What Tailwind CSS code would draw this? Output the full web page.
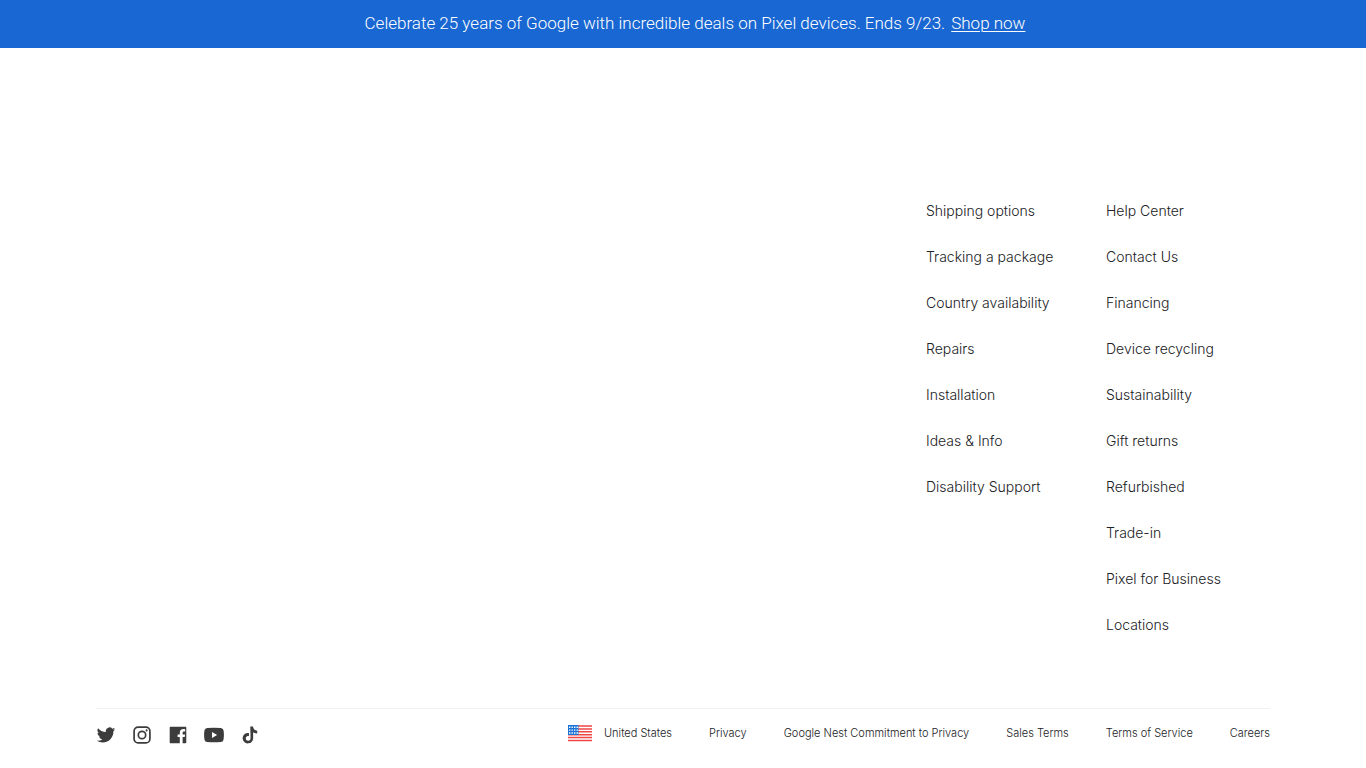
<!DOCTYPE html>
<html lang="en">
<head>
<meta charset="utf-8">
<meta name="viewport" content="width=device-width, initial-scale=1">
<title>Google Store</title>
<script src="https://cdn.jsdelivr.net/npm/@tailwindcss/browser@4"></script>
</head>
<body class="flex min-h-screen flex-col bg-white font-['Inter',sans-serif] font-light text-[#202124]">
<aside class="flex min-h-12 flex-wrap items-center justify-center gap-x-1.5 bg-[#1967d2] pb-0.5 pl-6 font-['Roboto',sans-serif] text-[17px] leading-6 text-white">
  <p>Celebrate 25 years of Google with incredible deals on Pixel devices. Ends 9/23.</p>
  <a href="#" class="underline decoration-1 underline-offset-2">Shop now</a>
</aside>
<footer class="flex grow flex-col px-24 pt-[150px]">
  <nav aria-label="Support" class="grid grid-cols-[180px_164px] justify-end text-sm leading-[26px]">
    <ul class="flex flex-col gap-5">
      <li><a href="#">Shipping options</a></li>
      <li><a href="#">Tracking a package</a></li>
      <li><a href="#">Country availability</a></li>
      <li><a href="#">Repairs</a></li>
      <li><a href="#">Installation</a></li>
      <li><a href="#">Ideas &amp; Info</a></li>
      <li><a href="#">Disability Support</a></li>
    </ul>
    <ul class="flex flex-col gap-5">
      <li><a href="#">Help Center</a></li>
      <li><a href="#">Contact Us</a></li>
      <li><a href="#">Financing</a></li>
      <li><a href="#">Device recycling</a></li>
      <li><a href="#">Sustainability</a></li>
      <li><a href="#">Gift returns</a></li>
      <li><a href="#">Refurbished</a></li>
      <li><a href="#">Trade-in</a></li>
      <li><a href="#">Pixel for Business</a></li>
      <li><a href="#">Locations</a></li>
    </ul>
  </nav>
  <div class="mt-[70px] flex items-start justify-between border-t border-[#f0f0f0] pt-4">
    <ul class="flex gap-4 text-[#3c3c3c]">
      <li><a href="#" aria-label="Twitter" class="block"><svg class="size-5" viewBox="0 0 20 20" fill="currentColor"><path transform="translate(.8 .7) scale(.77)" d="M23.95 4.57a10 10 0 0 1-2.82.78 4.96 4.96 0 0 0 2.16-2.73c-.95.56-2 .97-3.13 1.2a4.92 4.92 0 0 0-8.38 4.48C7.69 8.1 4.07 6.13 1.64 3.16a4.92 4.92 0 0 0 1.52 6.57 4.9 4.9 0 0 1-2.23-.61v.06a4.93 4.93 0 0 0 3.95 4.83 5 5 0 0 1-2.21.08 4.94 4.94 0 0 0 4.6 3.42A9.87 9.87 0 0 1 0 19.54a14 14 0 0 0 7.55 2.21c9.05 0 14-7.5 14-13.98l-.02-.64a10 10 0 0 0 2.42-2.56z"/></svg></a></li>
      <li><a href="#" aria-label="Instagram" class="block"><svg class="size-5" viewBox="0 0 20 20" fill="none" stroke="currentColor"><rect x="2.1" y="2.1" width="15.8" height="15.8" rx="4" stroke-width="1.7"/><circle cx="10" cy="10" r="3.7" stroke-width="1.7"/><circle cx="14.6" cy="5.4" r="1.05" fill="currentColor" stroke="none"/></svg></a></li>
      <li><a href="#" aria-label="Facebook" class="block"><svg class="size-5" viewBox="0 0 20 20" fill="currentColor"><path d="M2.7 1.7h14.6c.6 0 1 .4 1 1v14.6c0 .6-.4 1-1 1h-2.7v-6.2h2.1l.4-2.6h-2.5V7.9c0-.8.4-1.3 1.4-1.3h1.2V4.3c-.5-.1-1.1-.2-1.8-.2-2.2 0-3.6 1.3-3.6 3.6v1.8H9.6v2.6h2.2v6.2H2.7c-.6 0-1-.4-1-1V2.7c0-.6.4-1 1-1z"/></svg></a></li>
      <li><a href="#" aria-label="YouTube" class="block"><svg class="size-5" viewBox="0 0 20 20" fill="currentColor"><path fill-rule="evenodd" d="M3.3 2.9Q10 2.4 16.7 2.9q2.4.2 2.8 2.4.8 4.7 0 9.4-.4 2.2-2.8 2.4-6.7.5-13.4 0-2.4-.2-2.8-2.4-.8-4.7 0-9.4.4-2.2 2.8-2.4zM8 7.1v5.8l5.1-2.9z"/></svg></a></li>
      <li><a href="#" aria-label="TikTok" class="block"><svg class="size-5" viewBox="0 0 20 20" fill="currentColor"><path transform="translate(1.5 1.6) scale(.7)" d="M12.53.02C13.84 0 15.14.01 16.44 0c.08 1.53.63 3.09 1.75 4.17 1.12 1.11 2.7 1.62 4.24 1.79v4.03a10.7 10.7 0 0 1-5.77-1.92v8.74c-.08 1.4-.54 2.79-1.35 3.94a7.45 7.45 0 0 1-5.91 3.21 7.5 7.5 0 0 1-4.08-1.03 7.55 7.55 0 0 1-3.65-5.71 7.5 7.5 0 0 1 8.96-8.04v4.44c-.99-.32-2.15-.23-3.02.37a3.5 3.5 0 0 0-1.36 1.75c-.21.51-.15 1.07-.14 1.61a3.37 3.37 0 0 0 3.5 3.02 3.35 3.35 0 0 0 2.77-1.61c.19-.33.4-.67.41-1.06.11-1.79.07-3.57.07-5.36z"/></svg></a></li>
    </ul>
    <ul class="flex flex-wrap gap-x-[37px] text-[11px] leading-4">
      <li><a href="#" class="flex gap-3"><svg class="h-[17px] w-6" viewBox="0 0 24 17"><path fill="#fff" d="M0 0h24v17H0z"/><path stroke="#ef4545" stroke-width="1.5" d="M0 1h24M0 3.9h24M0 6.8h24M0 9.7h24M0 12.6h24M0 15.5h24"/><path fill="#1a73d6" d="M0 0h10.5v10H0z"/><path fill="none" stroke="#fff" stroke-width="1.4" stroke-dasharray="1.4 1.1" d="M1 2.2h8.9M1 5.1h8.9M1 8h8.9"/></svg>United States</a></li>
      <li><a href="#">Privacy</a></li>
      <li><a href="#">Google Nest Commitment to Privacy</a></li>
      <li><a href="#">Sales Terms</a></li>
      <li><a href="#">Terms of Service</a></li>
      <li><a href="#">Careers</a></li>
    </ul>
  </div>
</footer>
</body>
</html>
